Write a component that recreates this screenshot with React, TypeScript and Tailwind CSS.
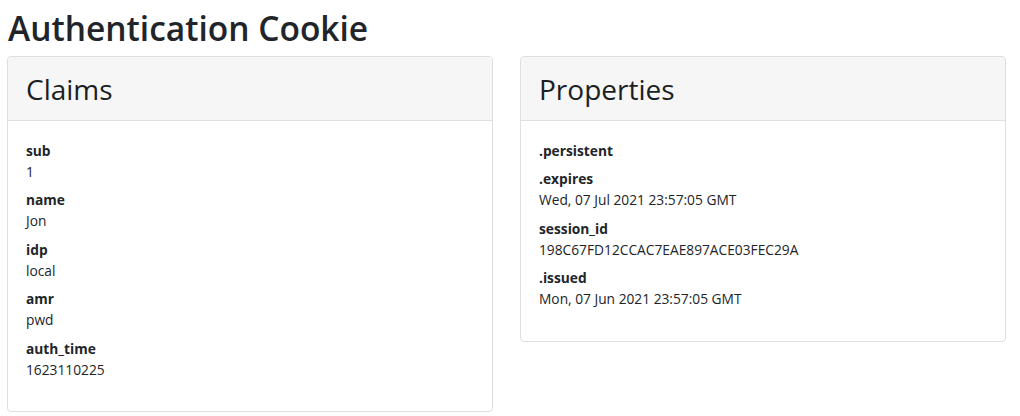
import React from 'react';

type Entry = { key: string; value: string };

const claims: Entry[] = [
  { key: 'sub', value: '1' },
  { key: 'name', value: 'Jon' },
  { key: 'idp', value: 'local' },
  { key: 'amr', value: 'pwd' },
  { key: 'auth_time', value: '1623110225' },
];

const properties: Entry[] = [
  { key: '.persistent', value: '' },
  { key: '.expires', value: 'Wed, 07 Jul 2021 23:57:05 GMT' },
  { key: 'session_id', value: '198C67FD12CCAC7EAE897ACE03FEC29A' },
  { key: '.issued', value: 'Mon, 07 Jun 2021 23:57:05 GMT' },
];

function InfoCard({ title, items }: { title: string; items: Entry[] }) {
  return (
    <div className="flex-1 rounded border border-[#dfdfdf] bg-white">
      {/* Header */}
      <div className="h-[64px] rounded-t border-b border-[#dfdfdf] bg-[#f6f6f6] px-[18px] flex items-center">
        <h2 className="text-[28px] leading-none text-[#1b1f23]">{title}</h2>
      </div>

      {/* Key / value list */}
      <dl className="px-[18px] pt-[18.5px] pb-[24px] text-[13.75px] leading-[21px] text-[#212529]">
        {items.map((item) => (
          <React.Fragment key={item.key}>
            <dt className="font-bold">{item.key}</dt>
            <dd className="mb-[7.5px]">{item.value}</dd>
          </React.Fragment>
        ))}
      </dl>
    </div>
  );
}

export default function App() {
  return (
    <div
      className="w-[1020px] h-[416px] bg-white px-[7px] pt-[5px]"
      style={{ fontFamily: '"Open Sans", "Noto Sans", sans-serif' }}
    >
      <h1 className="text-[33.5px] leading-[46px] font-semibold text-[#212529] pl-px">Authentication Cookie</h1>
      <div className="mt-[5px] flex items-start gap-[27px] pr-[7px]">
        <InfoCard title="Claims" items={claims} />
        <InfoCard title="Properties" items={properties} />
      </div>
    </div>
  );
}
